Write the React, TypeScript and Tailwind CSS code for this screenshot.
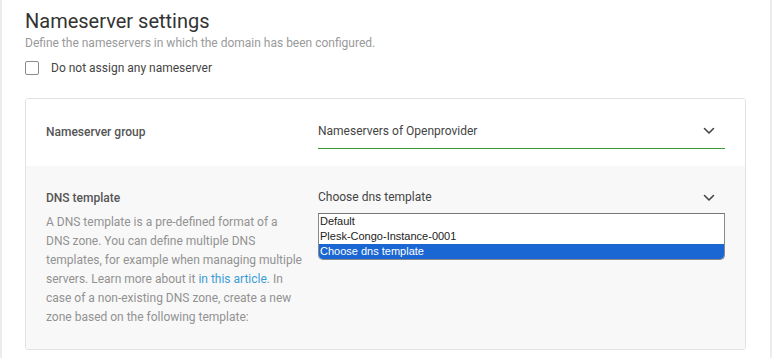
import React from 'react';

const Chevron: React.FC = () => (
  <svg width="12" height="8" viewBox="0 0 12 8" fill="none" className="mr-[10px]">
    <path d="M1.5 1.5L6 6L10.5 1.5" stroke="#444" strokeWidth="1.6" strokeLinecap="round" strokeLinejoin="round" />
  </svg>
);

const options = ['Default', 'Plesk-Congo-Instance-0001', 'Choose dns template'];

const App: React.FC = () => {
  return (
    <div
      className="w-[772px] h-[358px] bg-white border-l-2 border-r-2 border-[#ececec] overflow-hidden"
      style={{ fontFamily: 'Roboto, "Liberation Sans", sans-serif' }}
    >
      <div className="pl-[23px] pr-[24px]">
        <h1 className="text-[20px] leading-[24px] pt-[9px] text-[#333] font-normal">Nameserver settings</h1>
        <p className="mt-[3px] text-[12px] leading-[14px] text-[#9a9a9a]">
          Define the nameservers in which the domain has been configured.
        </p>
        <label className="mt-[11px] flex items-center gap-[12px]">
          <span className="w-[14px] h-[14px] border border-[#8a8a8a] rounded-[2px] bg-white" />
          <span className="text-[12px] leading-[14px] text-[#444]">Do not assign any nameserver</span>
        </label>

        {/* card */}
        <div className="mt-[23px] w-[721px] border border-[#e2e2e2] rounded-[3px] overflow-hidden">
          <div className="flex bg-white px-[20px] pt-[16px] pb-[17px]">
            <div className="w-[272px] pt-[10px] text-[12px] leading-[14px] font-medium text-[#555]">
              Nameserver group
            </div>
            <div className="flex-1">
              <div className="h-[34px] flex items-center justify-between border-b border-[#3a9a34] pb-[1px]">
                <span className="text-[12px] text-[#444]">Nameservers of Openprovider</span>
                <Chevron />
              </div>
            </div>
          </div>

          <div className="flex bg-[#f8f8f8] px-[20px] pt-[25px] pb-[22px]">
            <div className="w-[272px]">
              <div className="text-[12px] leading-[14px] font-medium text-[#555]">DNS template</div>
              <p className="mt-[8px] w-[258px] text-[12px] leading-[19px] text-[#929292]">
                A DNS template is a pre-defined format of a DNS zone. You can define multiple DNS
                templates, for example when managing multiple servers. Learn more about it{' '}
                <a className="text-[#3c9dd5]">in this article</a>. In case of a non-existing DNS zone,
                create a new zone based on the following template:
              </p>
            </div>
            <div className="flex-1 -mt-[5px]">
              <div className="h-[28px] flex items-start pt-[2px] justify-between border-b border-[#777]">
                <span className="text-[12px] text-[#444]">Choose dns template</span>
                <span className="pt-[6px]"><Chevron /></span>
              </div>
              <div
                className="border border-[#8a8a8a] border-t-0 rounded-b-[5px] overflow-hidden bg-white"
                style={{ fontFamily: '"Liberation Sans", Arial, sans-serif' }}
              >
                {options.map((o, i) => (
                  <div
                    key={o}
                    className={`h-[15px] leading-[15px] pl-[1px] text-[11px] ${
                      i === 2 ? 'bg-[#1a66d2] text-white' : 'text-[#222]'
                    }`}
                  >
                    {o}
                  </div>
                ))}
              </div>
            </div>
          </div>
        </div>
      </div>
    </div>
  );
};

export default App;
